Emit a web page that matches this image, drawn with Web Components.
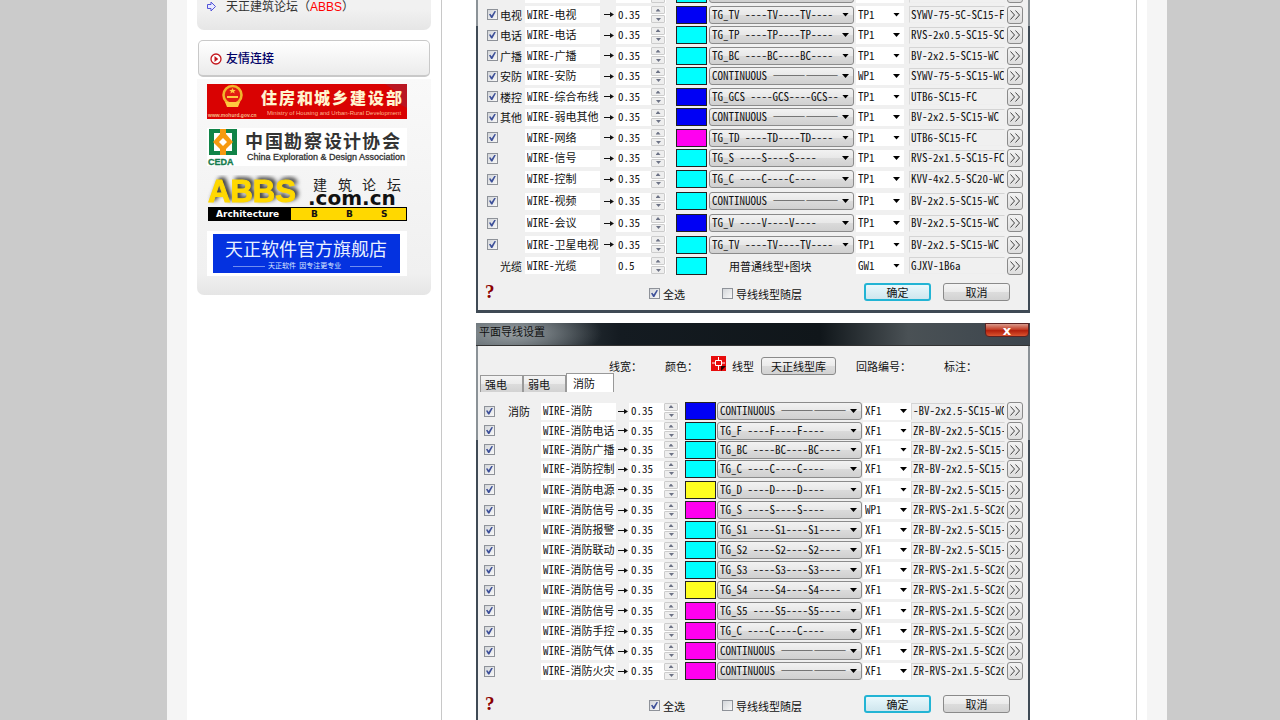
<!DOCTYPE html>
<html lang="zh-CN">
<head>
<meta charset="utf-8">
<title>天正电气 - 平面导线设置</title>
<style>
  body { margin: 0; background: #cbcbcb; font: 12px/18px "Liberation Sans", "Noto Sans CJK SC", sans-serif; color: #222; overflow: hidden; height: 100vh; }
</style>
</head>
<body>
<page-frame>
  <side-bar slot="side"></side-bar>
  <wire-dialog id="weak" class="scrolled"></wire-dialog>
  <wire-dialog id="fire" titled></wire-dialog>
</page-frame>

<script>
function shadow(host, html) {
  const root = host.attachShadow({ mode: "open" });
  const t = document.createElement("template");
  t.innerHTML = html;
  root.appendChild(t.content.cloneNode(true));
  return root;
}

const BUTTON_CSS = `
  button { box-sizing: border-box; font: inherit; color: #111; padding: 0; border: 1px solid #8a8a8a; border-radius: 3px;
    background: linear-gradient(#f4f4f4, #ebebeb 48%, #dcdcdc 52%, #d2d2d2); }
`;
const CHECK_CSS = `
  input[type=checkbox] { appearance: none; box-sizing: border-box; width: 11px; height: 11px; margin: 0; border: 1px solid #8e9299;
    background: linear-gradient(135deg, #d3d6da, #f8f8f8); display: grid; place-items: center; }
  input[type=checkbox]:checked::after { content: ""; width: 7px; height: 7px; background: #3d5099;
    clip-path: polygon(0 45%, 20% 40%, 38% 65%, 80% 0, 100% 5%, 48% 100%, 30% 100%); }
`;

customElements.define("page-frame", class extends HTMLElement {
  constructor() {
    super();
    shadow(this, `
      <style>
        :host { display: grid; grid-template-columns: 167fr 1000fr 113fr; height: 100vh; overflow: hidden; }
        .page { grid-column: 2; box-sizing: border-box; background: #f5f5f5; padding: 0 20px; overflow: hidden; }
        .sheet { display: flex; background: #fff; height: 100%; }
        aside { flex: none; width: 254px; box-sizing: border-box; padding: 0 10px; }
        main { flex: 1; min-width: 0; box-sizing: border-box; border: solid #c8c8c8; border-width: 0 1px;
          padding: 0 106px 0 34px; margin-right: 10px; display: flex; flex-direction: column; gap: 10px; }
      </style>
      <div class="page"><div class="sheet">
        <aside><slot name="side"></slot></aside>
        <main><slot></slot></main>
      </div></div>`);
  }
});

customElements.define("side-bar", class extends HTMLElement {
  constructor() {
    super();
    shadow(this, `
      <style>
        :host { display: block; }
        a { color: #333; text-decoration: none; }
        .links { display: flex; align-items: flex-start; gap: 9px; height: 30px; box-sizing: border-box; padding-left: 9px;
          background: linear-gradient(#f1f1f1 30%, #e6e6e6); border-radius: 0 0 7px 7px; margin-bottom: 10px; }
        .links svg { margin-top: 1px; width: 11px; height: 11px; }
        .links a { margin-top: -1px; line-height: 16px; }
        b { font-weight: 400; color: #f00; }
        h2 { margin: 0 1px 2px; height: 37px; box-sizing: border-box; border: 1px solid #c9c9c9; border-bottom-width: 2px; border-radius: 5px;
          background: linear-gradient(#fff, #ebebeb); font-size: 12px; line-height: 18px; font-weight: 500; color: #006;
          display: flex; align-items: center; gap: 4px; padding: 1px 0 0 11px; }
        h2 svg { width: 12px; height: 12px; }
        .friends { display: flex; flex-direction: column; align-items: flex-start; gap: 9px; padding: 5px 10px 19px;
          border-radius: 0 0 7px 7px; background: linear-gradient(#f9f9f9, #f0f0f0 90%, #e5e5e5); }
        .friends a, .friends svg { display: block; }
        .abbs { filter: drop-shadow(3px -2px 2px #333); }
      </style>
      <div class="links">
        <svg viewBox="0 0 11 11"><path d="M1.500 3.500H5V1L9.500 5.500L5 10V7.500H1.500Z" fill="#e8eaff" stroke="#5252d8"/></svg>
        <a href="#abbs">天正建筑论坛（<b>ABBS</b>）</a>
      </div>
      <h2><svg viewBox="0 0 12 12"><circle cx="6" cy="6" r="5" fill="#fff" stroke="#c4161c" stroke-width="1.300"/><path d="M4.500 3L8.300 6L4.500 9Z" fill="#c4161c"/></svg>友情连接</h2>
      <div class="friends">
        <a href="#mohurd"><svg width="200" height="35" viewBox="0 0 200 35">
          <rect width="200" height="35" fill="#d90202"/><path d="M178 0H200V24L188 18L190 8Z" fill="#b91622"/>
          <circle cx="25.500" cy="11" r="9" fill="#e31b12" stroke="#f0b52c" stroke-width="2.600"/>
          <path d="M25.500 4l1 2h2.200l-1.700 1.400.7 2.200-2.200-1.300-2.200 1.300.7-2.200-1.700-1.400h2.200zM20 12h11v2H20zM18 18h15l-2 5H20z" fill="#ffc940"/>
          <text y="20" font-size="16" font-weight="900" font-family="Noto Sans CJK SC, sans-serif" fill="#fff4cf"><tspan x="54">住</tspan><tspan x="72">房</tspan><tspan x="90">和</tspan><tspan x="107">城</tspan><tspan x="125">乡</tspan><tspan x="143">建</tspan><tspan x="161">设</tspan><tspan x="179">部</tspan></text>
          <text x="1" y="33" font-size="5" font-weight="700" font-family="Liberation Sans, sans-serif" fill="#f3be8a">www.mohurd.gov.cn</text>
          <text x="60" y="31" font-size="6" font-family="Liberation Sans, sans-serif" fill="#ffb58d">Ministry of Housing and Urban-Rural Development</text>
        </svg></a>
        <a href="#ceda"><svg width="200" height="38" viewBox="0 0 200 38">
          <rect width="200" height="38" fill="#fff"/>
          <path d="M2 1H13V5H7V23H13V27H2ZM30 1H19V5H25V23H19V27H30Z" fill="#118448"/>
          <path d="M13 1H19V6L26 14L19 21V27H13V21L6 14L13 6Z" fill="#f79a10"/><path d="M16 10l4 4-4 4-4-4z" fill="#fff"/>
          <text x="1" y="37" font-size="9" font-weight="700" font-family="Liberation Sans, sans-serif" fill="#147b4c" stroke="#147b4c" stroke-width=".300">CEDA</text>
          <text y="20" font-size="18" font-weight="700" font-family="Noto Sans CJK SC, sans-serif" fill="#333"><tspan x="38">中</tspan><tspan x="58">国</tspan><tspan x="77">勘</tspan><tspan x="97">察</tspan><tspan x="117">设</tspan><tspan x="136">计</tspan><tspan x="155">协</tspan><tspan x="175">会</tspan></text>
          <text x="40" y="32" font-size="9" font-family="Liberation Sans, sans-serif" fill="#333" stroke="#333" stroke-width=".300">China Exploration &amp; Design Association</text>
        </svg></a>
        <a href="#abbs-site"><svg width="200" height="47" viewBox="0 0 200 47">
          <text class="abbs" x="1" y="27" font-size="31" font-weight="700" font-family="Liberation Sans, sans-serif" fill="#ffd800" stroke="#ffd800">ABBS</text>
          <text y="15" font-size="14" font-family="Noto Sans CJK SC, sans-serif" fill="#222"><tspan x="106">建</tspan><tspan x="131">筑</tspan><tspan x="155">论</tspan><tspan x="180">坛</tspan></text>
          <rect x="1" y="32" width="199" height="14" fill="#000"/><rect x="84" y="33" width="115" height="12" fill="#ffd800"/>
          <g font-family="DejaVu Sans, sans-serif" font-weight="700" fill="#111">
          <text x="101" y="30" font-size="20">.com.cn</text>
          <text x="9" y="42" font-size="9" fill="#fff">Architecture</text>
          <g font-size="9"><text x="104" y="42">B</text><text x="139" y="42">B</text><text x="174" y="42">S</text></g></g>
        </svg></a>
        <a href="#store"><svg width="200" height="45" viewBox="0 0 200 45">
          <rect width="200" height="45" fill="#fff"/><rect x="6" y="3" width="187" height="39" fill="#0432e0"/>
          <text x="18" y="25" font-size="18" font-family="Noto Sans CJK SC, sans-serif" fill="#e9f1ff">天正软件官方旗舰店</text>
          <text x="61" y="37" font-size="7" font-family="Noto Sans CJK SC, sans-serif" fill="#dbe6ff">天正软件&#160; 因专注更专业</text>
          <path d="M26 35.500H58M143 35.500H175" stroke="#6f8df0"/>
        </svg></a>
      </div>`);
  }
});

customElements.define("line-select", class extends HTMLElement {
  connectedCallback() {
    if (this.shadowRoot) return;
    shadow(this, `
      <style>
        :host { display: grid; align-items: center; min-width: 0; height: 17px; box-sizing: border-box; overflow: hidden; background: #fff; }
        :host([raised]) { height: 18px; border: 1px solid #8b8b8b; border-radius: 3px; background: linear-gradient(#f2f2f2, #e8e8e8 48%, #dadada 52%, #d0d0d0); }
        select { grid-area: 1 / 1; appearance: none; min-width: 0; width: 100%; height: 18px; padding: 0 0 0 2px; margin: -2px 0 0; border: 0; background: none; font: inherit; font-feature-settings: inherit; color: inherit; }
        i { grid-area: 1 / 1; justify-self: end; margin-right: 4px; width: 7px; height: 4px; background: #000; clip-path: polygon(0 0, 100% 0, 50% 100%); pointer-events: none; }
      </style>
      <select aria-label="${this.getAttribute("label")}"><option>${this.getAttribute("value")}</option></select><i></i>`);
  }
});

customElements.define("wire-row", class extends HTMLElement {
  connectedCallback() {
    if (this.shadowRoot) return;
    const d = this.data;
    shadow(this, `
      <style>
        :host { display: grid; grid-template-columns: var(--cols); align-items: center; height: 20px; }
        ${BUTTON_CSS}${CHECK_CSS}
        .arrow { width: 10px; height: 5px; justify-self: center; }
        .text { box-sizing: border-box; min-width: 0; width: 100%; height: 17px; border: 0; padding: 0 0 2px 2px; margin: 0; background: #fff; font: inherit; font-feature-settings: inherit; color: inherit; }
        .name { width: calc(100% - 1px); }
        .num { display: grid; grid-template-columns: 35px 14px; width: 50px; background: #fff; }
        .steps { display: grid; grid-template-rows: 8px 8px; gap: 1px; }
        .steps button { border: 1px solid #ccc; border-radius: 1px; background: #eee; display: grid; place-items: center; }
        .steps i { width: 5px; height: 3px; background: #6c7285; clip-path: polygon(50% 0, 100% 100%, 0 100%); }
        .steps button + button i { transform: rotate(180deg); }
        .swatch { width: 31px; height: 18px; border: 1px solid #222; border-radius: 0; background: ${d.color}; }
        .type { width: 145px; }
        .plain { margin-left: 20px; white-space: nowrap; }
        .circuit { width: 48px; }
        .note { border: 1px solid; border-color: #d4d4d4 #eee #eee #d9d9d9; background: #f0f0f0; width: calc(100% - 2px); padding: 0 0 2px 1px; }
        .more { width: 16px; height: 18px; display: grid; place-items: center; background: linear-gradient(#f2f2f2, #ddd); }
        .more svg { width: 12px; height: 10px; }
      </style>
      ${d.nocheck ? "<span></span>" : `<input type="checkbox" checked aria-label="启用 ${d.name}">`}
      <span>${d.cat || ""}</span>
      <input class="text name" aria-label="图层" value="${d.name}">
      ${d.nocheck ? "<span></span>" : `<svg class="arrow" viewBox="0 0 10 5"><path d="M0 2.500H7" stroke="#111"/><path d="M6 0L10 2.500L6 5Z" fill="#111"/></svg>`}
      <div class="num"><input class="text" aria-label="线宽" value="${d.width || "0.35"}"><div class="steps"><button aria-label="增加"><i></i></button><button aria-label="减少"><i></i></button></div></div>
      <button class="swatch" aria-label="颜色"></button>
      ${d.nocheck ? `<span class="plain">${d.type}</span>` : `<line-select class="type" raised label="线型" value="${d.type}"></line-select>`}
      <line-select class="circuit" label="回路编号" value="${d.circuit}"></line-select>
      <input class="text note" aria-label="标注" value="${d.note}">
      <button class="more" aria-label="更多"><svg viewBox="0 0 12 10"><path d="M1.500 .5L5.500 5L1.500 9.500M6.500 .5L10.500 5L6.500 9.500" fill="none" stroke="#444"/></svg></button>`);
  }
});

const C = "#00ffff", B = "#0000f5", M = "#ff00f0", Y = "#ffff20", LINE = "CONTINUOUS ——————";
const dashed = n => `TG_${n} ----${n}----${n}----`;
const row = (cat, name, color, type, circuit, note, extra) => ({ cat, name: "WIRE-" + name, color, type, circuit, note, ...extra });
const ROWS = {
  weak: [
    row("通讯", "通讯", C, dashed("TX"), "TP1", "RVS-2x0.5-SC15-FC"),
    row("电视", "电视", B, dashed("TV"), "TP1", "SYWV-75-5C-SC15-FC"),
    row("电话", "电话", C, dashed("TP"), "TP1", "RVS-2x0.5-SC15-SC"),
    row("广播", "广播", C, dashed("BC"), "TP1", "BV-2x2.5-SC15-WC"),
    row("安防", "安防", C, LINE, "WP1", "SYWV-75-5-SC15-WC"),
    row("楼控", "综合布线", B, "TG_GCS ----GCS----GCS--", "TP1", "UTB6-SC15-FC"),
    row("其他", "弱电其他", B, LINE, "TP1", "BV-2x2.5-SC15-WC"),
    row("", "网络", M, dashed("TD"), "TP1", "UTB6-SC15-FC"),
    row("", "信号", C, dashed("S"), "TP1", "RVS-2x1.5-SC15-FC"),
    row("", "控制", C, dashed("C"), "TP1", "KVV-4x2.5-SC20-WC"),
    row("", "视频", C, LINE, "TP1", "BV-2x2.5-SC15-WC"),
    row("", "会议", B, dashed("V"), "TP1", "BV-2x2.5-SC15-WC"),
    row("", "卫星电视", C, dashed("TV"), "TP1", "BV-2x2.5-SC15-WC"),
    row("光缆", "光缆", C, "用普通线型+图块", "GW1", "GJXV-1B6a", { width: "0.5", nocheck: true })
  ],
  fire: [
    row("消防", "消防", B, LINE, "XF1", "-BV-2x2.5-SC15-WC"),
    row("", "消防电话", C, dashed("F"), "XF1", "ZR-BV-2x2.5-SC15-"),
    row("", "消防广播", C, dashed("BC"), "XF1", "ZR-BV-2x2.5-SC15-"),
    row("", "消防控制", C, dashed("C"), "XF1", "ZR-BV-2x2.5-SC15-"),
    row("", "消防电源", Y, dashed("D"), "XF1", "ZR-BV-2x2.5-SC15-"),
    row("", "消防信号", M, dashed("S"), "WP1", "ZR-RVS-2x1.5-SC20"),
    row("", "消防报警", C, dashed("S1"), "XF1", "ZR-BV-2x2.5-SC15-"),
    row("", "消防联动", C, dashed("S2"), "XF1", "ZR-BV-2x2.5-SC15-"),
    row("", "消防信号", C, dashed("S3"), "XF1", "ZR-RVS-2x1.5-SC20"),
    row("", "消防信号", Y, dashed("S4"), "XF1", "ZR-RVS-2x1.5-SC20"),
    row("", "消防信号", M, dashed("S5"), "XF1", "ZR-RVS-2x1.5-SC20"),
    row("", "消防手控", M, dashed("C"), "XF1", "ZR-RVS-2x1.5-SC20"),
    row("", "消防气体", M, LINE, "XF1", "ZR-RVS-2x1.5-SC20"),
    row("", "消防火灾", M, LINE, "XF1", "ZR-RVS-2x1.5-SC20")
  ]
};

customElements.define("wire-dialog", class extends HTMLElement {
  connectedCallback() {
    if (this.shadowRoot) return;
    const head = this.hasAttribute("titled") ? `
      <header><span>平面导线设置</span><button class="close" aria-label="关闭">x</button></header>
      <div class="heads">
        <span>线宽：</span><span>颜色：</span>
        <svg viewBox="0 0 15 15"><rect width="15" height="15" fill="#e80c0c"/><path d="M7.500 1V4M1 7H4M11 7H14M7.500 10V14M4.500 4.500H10.500V9.500H4.500Z" fill="none" stroke="#fff"/><path d="M10 15V10H15Z" fill="#200"/></svg>
        <span>线型</span><button>天正线型库</button><span>回路编号：</span><span>标注：</span>
      </div>
      <nav><button>强电</button><button>弱电</button><button class="on">消防</button></nav>` : "";
    const root = shadow(this, `
      <style>
        :host { display: block; flex: none; box-sizing: border-box; max-width: 554px; background: #f0f0f0;
          border: solid #3f4a55; border-width: 0 2px 3px; --edge: 42px;
          border-image: linear-gradient(#8b9297 var(--edge), #3f4a55 var(--edge)) 0 2 3 2;
          font: 11px/16px "Noto Sans CJK SC", sans-serif; font-feature-settings: "hwid" 1; color: #111; }
        :host(.scrolled) { margin-top: -16px; }
        :host([titled]) { --edge: 117px; }
        ${BUTTON_CSS}${CHECK_CSS}
        .rows { padding: 0 5px 0 9px; --cols: 13px 25px 76px 15px 60px 33px 147px 53px minmax(0, 1fr) 16px; }
        .rows wire-row:nth-child(even) { height: 21px; }
        .rows wire-row:nth-child(n+10) { height: 22px; }
        .rows wire-row:nth-child(n+13) { height: 21px; }
        :host([titled]) .rows { padding: 9px 5px 0 6px; --cols: 24px 33px 76px 12px 56px 32px 146px 48px minmax(0, 1fr) 16px; }
        :host([titled]) .rows wire-row { height: 20px; }
        :host([titled]) .rows wire-row:nth-child(2), :host([titled]) .rows wire-row:nth-child(3) { height: 19px; }
        :host([titled]) .rows wire-row:nth-child(5), :host([titled]) .rows wire-row:nth-child(11) { height: 21px; }
        header { display: flex; justify-content: space-between; height: 23px; box-sizing: border-box; margin: 0 -2px; padding: 0 1px 0 3px;
          border-bottom: 1px solid #333;
          background: radial-gradient(ellipse 90px 30px at 36px 10px, #99a0a4, #66707600), linear-gradient(90deg, #4c565c, #141b21 26%, #10161a 62%, #4a5155 78%, #3c454d); }
        .close { width: 44px; height: 14px; border-color: #5b2222; border-radius: 0 0 4px 4px; background: linear-gradient(#d99a8c, #c43f28 45%, #b3200c 55%, #d9542f); color: #fff; font: 700 13px/9px "DejaVu Sans", sans-serif; }
        .heads { display: grid; grid-template-columns: 56px 46px 21px 29px 95px 88px 1fr; align-items: center; height: 28px; padding: 10px 0 0 131px; box-sizing: border-box; }
        .heads svg { width: 15px; height: 15px; margin-bottom: 4px; }
        .heads button { width: 75px; height: 18px; line-height: 14px; }
        nav { display: flex; align-items: flex-end; padding-left: 2px; height: 18px; }
        nav button { width: 43px; height: 17px; border: solid #999; border-width: 1px 1px 0; border-radius: 0; text-align: left; padding-left: 4px; line-height: 16px; }
        nav .on { width: 48px; height: 19px; background: #fff; padding-left: 6px; }
        footer { display: grid; grid-template-columns: 164px 73px 142px 79px 1fr; align-items: center; height: 34px; box-sizing: border-box; padding: 0 0 3px 7px; }
        :host([titled]) footer { height: 48px; }
        footer label { display: flex; align-items: center; gap: 3px; white-space: nowrap; padding-top: 4px; }
        footer > button { width: 67px; height: 18px; line-height: 14px; }
        .ok { border: 2px solid #22b4d4; background: linear-gradient(#e9f8fc, #cfe6ee); line-height: 12px; }
        .help { font: 700 19px/20px "Liberation Serif", serif; color: #8b0000; text-decoration: none; }
      </style>
      ${head}
      <div class="rows"></div>
      <footer>
        <a class="help" href="#help">?</a>
        <label><input type="checkbox" checked>全选</label>
        <label><input type="checkbox">导线线型随层</label>
        <button class="ok">确定</button><button>取消</button>
      </footer>`);
    const rows = root.querySelector(".rows");
    for (const data of ROWS[this.id]) {
      const el = document.createElement("wire-row");
      el.data = data;
      rows.appendChild(el);
    }
  }
});
</script>
</body>
</html>
